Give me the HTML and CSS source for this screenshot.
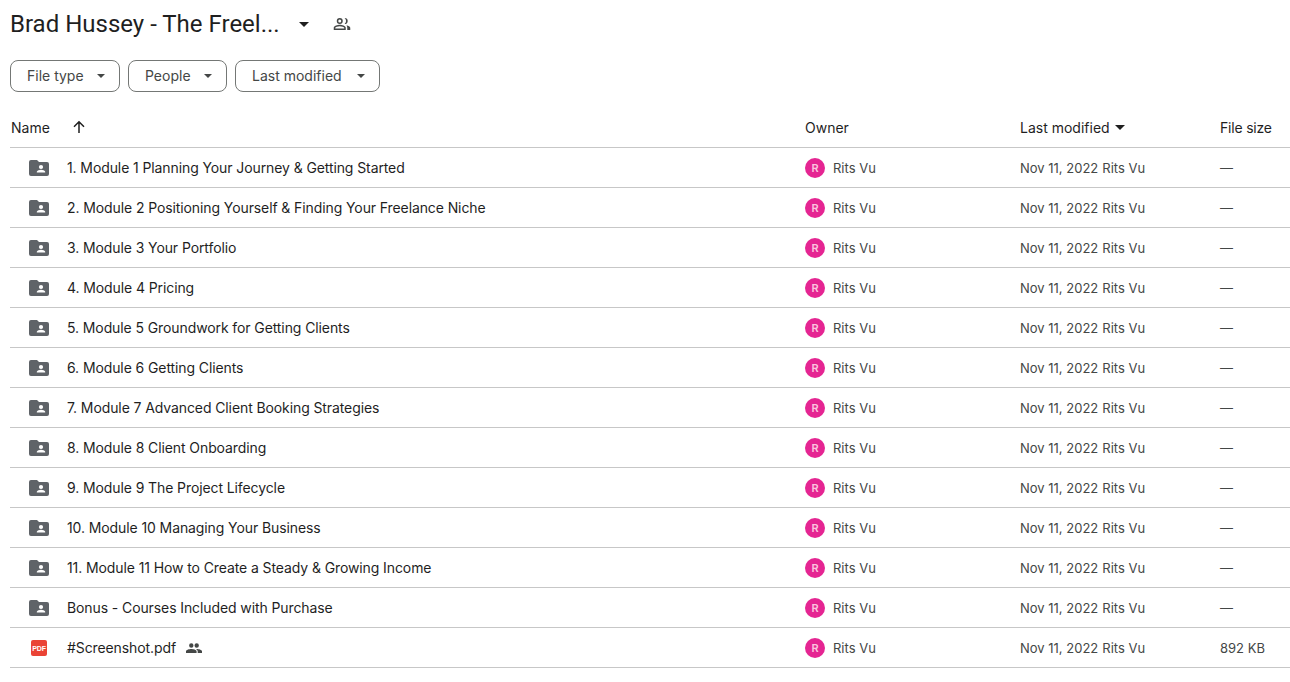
FILE: index.html
```html
<!DOCTYPE html>
<html lang="en">
<head>
<meta charset="utf-8">
<title>Brad Hussey - The Freelance</title>
<link rel="stylesheet" href="styles.css">
</head>
<body>
<svg class="defs" width="0" height="0" aria-hidden="true">
  <symbol id="shared-folder" viewBox="0 0 20 16">
    <path fill="#5f6368" d="M2 0h6l2 2h8a2 2 0 0 1 2 2v10a2 2 0 0 1-2 2H2a2 2 0 0 1-2-2V2a2 2 0 0 1 2-2z"/>
    <circle cx="12" cy="7" r="2.1" fill="#fff"/>
    <path fill="#fff" d="M7.8 12.6v-.8c0-1.3 2.8-2 4.2-2s4.2.7 4.2 2v.8z"/>
  </symbol>
  <symbol id="caret" viewBox="0 0 10 5"><path fill="currentColor" d="M0 0h10L5 5z"/></symbol>
</svg>
<header class="title-row">
  <h1 class="title">Brad Hussey - The Freel...</h1>
  <svg class="title-caret"><use href="#caret"/></svg>
  <svg class="title-people" viewBox="0 0 24 24"><path fill="#444746" d="M9 12a4 4 0 1 0 0-8 4 4 0 0 0 0 8zm0-6a2 2 0 1 1 0 4 2 2 0 0 1 0-4zm0 7c-2.700 0-8 1.340-8 4v3h16v-3c0-2.660-5.300-4-8-4zm6 5H3v-1c.2-.7 3.300-2 6-2s5.800 1.300 6 2v1zm.5-14.100a4 4 0 0 1 0 8.200 6 6 0 0 0 0-8.200zM18 13.500c2.500.6 5 1.800 5 3.500v3h-4v-3c0-1.400-.4-2.600-1-3.500z"/></svg>
</header>
<div class="chips">
  <button class="chip chip-type">File type<svg class="chip-caret"><use href="#caret"/></svg></button>
  <button class="chip chip-people">People<svg class="chip-caret"><use href="#caret"/></svg></button>
  <button class="chip chip-modified">Last modified<svg class="chip-caret"><use href="#caret"/></svg></button>
</div>
<main class="table">
  <div class="row head">
    <div class="head-name">Name<svg class="sort-arrow" viewBox="0 0 14 14"><path fill="none" stroke="#1f1f1f" stroke-width="1.500" d="M7 13V2M2 6.800 7 1.800l5 5"/></svg></div>
    <div>Owner</div>
    <div class="head-mod">Last modified<svg class="mod-caret"><use href="#caret"/></svg></div>
    <div class="head-size">File size</div>
  </div>
  <div class="row"><div class="name"><svg class="folder"><use href="#shared-folder"/></svg>1. Module 1 Planning Your Journey &amp; Getting Started</div><div class="owner"><span class="avatar">R</span>Rits Vu</div><div class="mod"><span>Nov 11, 2022</span><span>Rits Vu</span></div><div class="size">—</div></div>
  <div class="row"><div class="name"><svg class="folder"><use href="#shared-folder"/></svg>2. Module 2 Positioning Yourself &amp; Finding Your Freelance Niche</div><div class="owner"><span class="avatar">R</span>Rits Vu</div><div class="mod"><span>Nov 11, 2022</span><span>Rits Vu</span></div><div class="size">—</div></div>
  <div class="row"><div class="name"><svg class="folder"><use href="#shared-folder"/></svg>3. Module 3 Your Portfolio</div><div class="owner"><span class="avatar">R</span>Rits Vu</div><div class="mod"><span>Nov 11, 2022</span><span>Rits Vu</span></div><div class="size">—</div></div>
  <div class="row"><div class="name"><svg class="folder"><use href="#shared-folder"/></svg>4. Module 4 Pricing</div><div class="owner"><span class="avatar">R</span>Rits Vu</div><div class="mod"><span>Nov 11, 2022</span><span>Rits Vu</span></div><div class="size">—</div></div>
  <div class="row"><div class="name"><svg class="folder"><use href="#shared-folder"/></svg>5. Module 5 Groundwork for Getting Clients</div><div class="owner"><span class="avatar">R</span>Rits Vu</div><div class="mod"><span>Nov 11, 2022</span><span>Rits Vu</span></div><div class="size">—</div></div>
  <div class="row"><div class="name"><svg class="folder"><use href="#shared-folder"/></svg>6. Module 6 Getting Clients</div><div class="owner"><span class="avatar">R</span>Rits Vu</div><div class="mod"><span>Nov 11, 2022</span><span>Rits Vu</span></div><div class="size">—</div></div>
  <div class="row"><div class="name"><svg class="folder"><use href="#shared-folder"/></svg>7. Module 7 Advanced Client Booking Strategies</div><div class="owner"><span class="avatar">R</span>Rits Vu</div><div class="mod"><span>Nov 11, 2022</span><span>Rits Vu</span></div><div class="size">—</div></div>
  <div class="row"><div class="name"><svg class="folder"><use href="#shared-folder"/></svg>8. Module 8 Client Onboarding</div><div class="owner"><span class="avatar">R</span>Rits Vu</div><div class="mod"><span>Nov 11, 2022</span><span>Rits Vu</span></div><div class="size">—</div></div>
  <div class="row"><div class="name"><svg class="folder"><use href="#shared-folder"/></svg>9. Module 9 The Project Lifecycle</div><div class="owner"><span class="avatar">R</span>Rits Vu</div><div class="mod"><span>Nov 11, 2022</span><span>Rits Vu</span></div><div class="size">—</div></div>
  <div class="row"><div class="name"><svg class="folder"><use href="#shared-folder"/></svg>10. Module 10 Managing Your Business</div><div class="owner"><span class="avatar">R</span>Rits Vu</div><div class="mod"><span>Nov 11, 2022</span><span>Rits Vu</span></div><div class="size">—</div></div>
  <div class="row"><div class="name"><svg class="folder"><use href="#shared-folder"/></svg>11. Module 11 How to Create a Steady &amp; Growing Income</div><div class="owner"><span class="avatar">R</span>Rits Vu</div><div class="mod"><span>Nov 11, 2022</span><span>Rits Vu</span></div><div class="size">—</div></div>
  <div class="row"><div class="name"><svg class="folder"><use href="#shared-folder"/></svg>Bonus - Courses Included with Purchase</div><div class="owner"><span class="avatar">R</span>Rits Vu</div><div class="mod"><span>Nov 11, 2022</span><span>Rits Vu</span></div><div class="size">—</div></div>
  <div class="row"><div class="name"><svg class="pdf" viewBox="0 0 16 16"><rect width="16" height="16" rx="2" fill="#ea4335"/><text x="8" y="10.500" text-anchor="middle" class="pdf-label">PDF</text></svg>#Screenshot.pdf<svg class="shared" viewBox="0 0 16 10"><path fill="#444746" d="M5.300 4.700a2.200 2.200 0 1 0 0-4.400 2.200 2.200 0 0 0 0 4.400zm5.400 0a2.200 2.200 0 1 0 0-4.400 2.200 2.200 0 0 0 0 4.400zM5.300 5.900C3.500 5.900 0 6.700 0 8.300V10h10.600V8.300c0-1.600-3.500-2.400-5.300-2.400zm5.400 0h-.8c1 .6 1.800 1.400 1.800 2.400V10H16V8.300c0-1.600-3.500-2.400-5.300-2.400z"/></svg></div><div class="owner"><span class="avatar">R</span>Rits Vu</div><div class="mod"><span>Nov 11, 2022</span><span>Rits Vu</span></div><div class="size">892 KB</div></div>
</main>
</body>
</html>
```
FILE: styles.css
```css
* { box-sizing: border-box; }
html, body { margin: 0; height: 100%; overflow: hidden; }
body {
  background: #fff;
  color: #1f1f1f;
  font-family: Inter, Roboto, "Liberation Sans", sans-serif;
  font-size: 14px;
  padding-left: 10px;
}
.defs { position: absolute; }
.title-row { display: flex; align-items: center; height: 48px; }
.title { margin: 0; font-family: Roboto, Inter, sans-serif; font-size: 24px; font-weight: 400; line-height: 48px; width: 288px; }
.title-caret { width: 10px; height: 5px; margin-left: 1px; color: #1f1f1f; }
.title-people { width: 18px; height: 18px; margin-left: 24px; }
.chips { display: flex; margin-top: 12px; }
.chip {
  display: flex; align-items: center; height: 32px; padding: 0 0 1px 16px;
  background: #fff; border: 1px solid #747775; border-radius: 8px;
  font: inherit; color: #444746;
}
.chip-caret { width: 8px; height: 4px; margin-left: auto; margin-right: 14px; color: #444746; }
.chip-type { width: 110px; margin-right: 8px; }
.chip-people { width: 99px; margin-right: 8px; }
.chip-modified { width: 145px; }
.table { margin-top: 16px; }
.row {
  display: grid; grid-template-columns: 795px 215px 200px 70px;
  align-items: center; height: 40px;
  border-bottom: 1px solid #c7c7c7;
}
.head { height: 40px; color: #1f1f1f; }
.head-name { display: flex; align-items: center; padding-left: 1px; }
.sort-arrow { width: 14px; height: 14px; margin-left: 22px; margin-top: -2px; }
.head-mod { display: flex; align-items: center; }
.head-size { letter-spacing: -.2px; }
.mod-caret { width: 10px; height: 5px; margin-left: 5px; color: #1f1f1f; }
.name { display: flex; align-items: center; padding-left: 57px; position: relative; color: #1f1f1f; letter-spacing: -.1px; }
.folder { position: absolute; left: 19px; width: 20px; height: 16px; }
.pdf { position: absolute; left: 21px; width: 16px; height: 16px; }
.pdf-label { font-family: "Liberation Sans", sans-serif; font-size: 7px; font-weight: 700; fill: #fff; }
.shared { width: 16px; height: 10px; margin-left: 10px; }
.owner { display: flex; align-items: center; gap: 8px; color: #444746; font-size: 13px; }
.avatar {
  display: flex; align-items: center; justify-content: center;
  width: 20px; height: 20px; border-radius: 50%;
  background: #e52592; color: #fbc4de; font-size: 11px; font-weight: 600;
}
.mod { display: flex; gap: 4px; color: #444746; font-size: 13px; }
.size { color: #444746; font-size: 13px; }
```
